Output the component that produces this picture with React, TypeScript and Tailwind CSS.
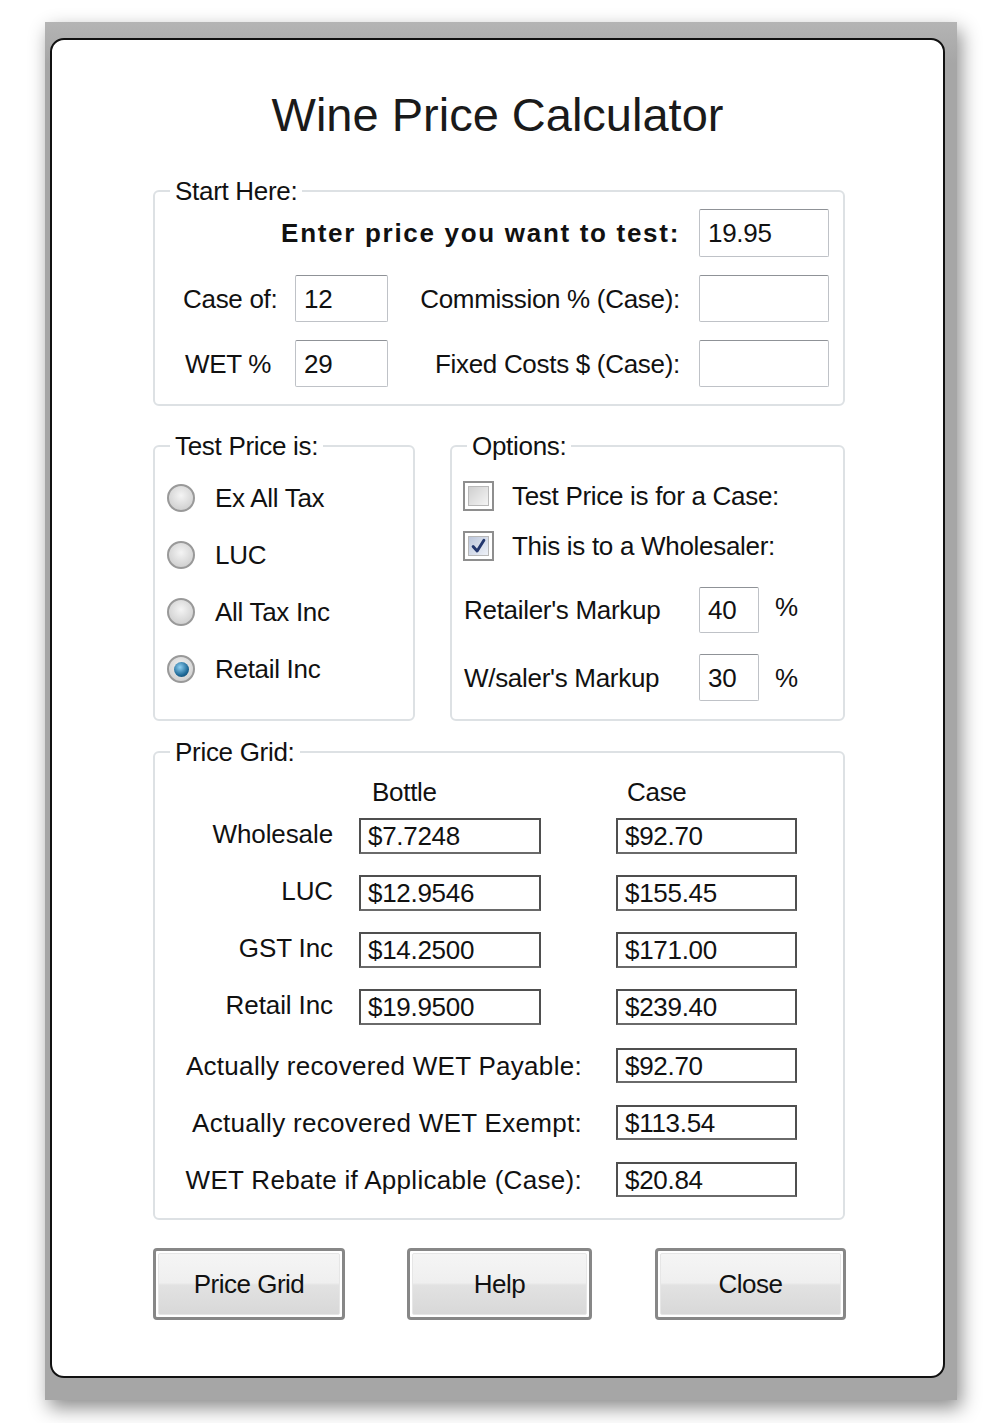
import type { ReactNode } from 'react'

function Group({ title, className, children }: { title: string; className: string; children: ReactNode }) {
  return (
    <fieldset className={`border-2 border-[#dde1e4] rounded-[6px] ${className}`}>
      <legend className="ml-[15px] px-[5px] text-[26px] leading-[30px] tracking-[-0.3px] text-[#111]">{title}</legend>
      {children}
    </fieldset>
  )
}

function Input({ value, className }: { value?: string; className: string }) {
  return (
    <div
      className={`flex items-center bg-white border border-[#bfc2c7] border-t-[#8f9297] rounded-[2px] pl-[8px] text-[26px] tracking-[-0.3px] text-[#111] ${className}`}
    >
      {value}
    </div>
  )
}

function Readout({ value, className }: { value: string; className: string }) {
  return (
    <div
      className={`flex items-center bg-white border-2 border-[#4f4f4f] border-b-[#6a6a6a] pl-[7px] text-[26px] tracking-[-0.3px] text-[#111] ${className}`}
    >
      {value}
    </div>
  )
}

function Radio({ text, checked }: { text: string; checked?: boolean }) {
  return (
    <div className="flex items-center h-[40px] gap-[20px]">
      <div className="w-[28px] h-[28px] rounded-full border-2 border-[#999] bg-[radial-gradient(circle_at_50%_40%,#f4f4f4,#c6c6c6)] flex items-center justify-center">
        {checked && (
          <div className="w-[15px] h-[15px] rounded-full bg-[radial-gradient(circle_at_40%_35%,#8fd0f2,#1f6a98_60%,#0b3858)]" />
        )}
      </div>
      <span className="text-[26px] tracking-[-0.3px] text-[#111]">{text}</span>
    </div>
  )
}

function Check({ text, checked }: { text: string; checked?: boolean }) {
  return (
    <div className="flex items-center h-[30px] gap-[18px]">
      <div className="w-[31px] h-[30px] border-2 border-[#8e8e8e] bg-white p-[3px]">
        <div
          className={`relative w-full h-full border border-[#b8b8b8] ${
            checked
              ? 'bg-[linear-gradient(135deg,#bcc7dc,#eef1f7)]'
              : 'bg-[linear-gradient(135deg,#cfcfcf,#f4f4f4)]'
          }`}
        >
          {checked && (
            <svg viewBox="0 0 20 20" className="absolute inset-0 w-full h-full">
              <path d="M4 10.5 L8.5 15.5 L16 3.5" fill="none" stroke="#23376e" strokeWidth="3.2" strokeLinecap="round" strokeLinejoin="round" />
            </svg>
          )}
        </div>
      </div>
      <span className="text-[26px] tracking-[-0.3px] text-[#111]">{text}</span>
    </div>
  )
}

function Button({ text, className }: { text: string; className: string }) {
  return (
    <div className={`h-[72px] rounded-[4px] border-[3px] border-[#878787] bg-white p-[2px] ${className}`}>
      <div className="h-full rounded-[2px] border border-[#e6e6e6] bg-[linear-gradient(#f5f5f5,#efefef_48%,#e2e2e2_52%,#d8d8d8)] flex items-center justify-center text-[26px] tracking-[-0.5px] text-[#111]">
        {text}
      </div>
    </div>
  )
}

const gridRows = [
  { name: 'Wholesale', bottle: '$7.7248', kase: '$92.70' },
  { name: 'LUC', bottle: '$12.9546', kase: '$155.45' },
  { name: 'GST Inc', bottle: '$14.2500', kase: '$171.00' },
  { name: 'Retail Inc', bottle: '$19.9500', kase: '$239.40' },
]

const wetRows = [
  { name: 'Actually recovered WET Payable:', value: '$92.70' },
  { name: 'Actually recovered WET Exempt:', value: '$113.54' },
  { name: 'WET Rebate if Applicable (Case):', value: '$20.84' },
]

export default function App() {
  return (
    <div className="w-[1000px] min-h-[1423px] bg-white pt-[22px] pl-[45px] leading-[30px] font-['Liberation_Sans',Arial,sans-serif]">
      {/* window frame */}
      <div className="w-[912px] h-[1378px] bg-[linear-gradient(#b4b4b4,#a6a6a6_3%,#a6a6a6)] pt-[16px] pl-[5px] shadow-[4px_8px_18px_rgba(0,0,0,0.45)]">
        <div className="w-[895px] h-[1340px] bg-white border-2 border-[#111] rounded-[14px] flex flex-col">
          <h1 className="mt-[48px] text-center text-[47px] leading-[53px] text-[#1a1a1a]">Wine Price Calculator</h1>

          {/* Start Here */}
          <Group title="Start Here:" className="ml-[101px] mt-[35px] w-[692px] pt-[3px] pb-[17px]">
            <div className="flex items-center justify-end pr-[14px] gap-[19px]">
              <span className="font-bold text-[26px] tracking-[1.7px] text-[#111]">Enter price you want to test:</span>
              <Input value="19.95" className="w-[130px] h-[48px]" />
            </div>
            <div className="flex items-center mt-[18px] pl-[28px] pr-[14px]">
              <span className="w-[112px] text-[26px] tracking-[-0.3px] text-[#111]">Case of:</span>
              <Input value="12" className="w-[93px] h-[47px]" />
              <span className="flex-1 text-right pr-[19px] text-[26px] tracking-[-0.3px] text-[#111]">Commission % (Case):</span>
              <Input className="w-[130px] h-[47px]" />
            </div>
            <div className="flex items-center mt-[18px] pl-[30px] pr-[14px]">
              <span className="w-[110px] text-[26px] tracking-[-0.3px] text-[#111]">WET %</span>
              <Input value="29" className="w-[93px] h-[47px]" />
              <span className="flex-1 text-right pr-[19px] text-[26px] tracking-[-0.3px] text-[#111]">Fixed Costs $ (Case):</span>
              <Input className="w-[130px] h-[47px]" />
            </div>
          </Group>

          {/* Test price + options */}
          <div className="ml-[101px] mt-[25px] w-[692px] flex gap-[35px]">
            <Group title="Test Price is:" className="w-[262px] h-[290px]">
              <div className="flex flex-col gap-[17px] pt-[17px] pl-[12px]">
                <Radio text="Ex All Tax" />
                <Radio text="LUC" />
                <Radio text="All Tax Inc" />
                <Radio text="Retail Inc" checked />
              </div>
            </Group>
            <Group title="Options:" className="w-[395px] h-[290px]">
              <div className="pt-[20px] pl-[11px]">
                <div className="flex flex-col gap-[20px]">
                  <Check text="Test Price is for a Case:" />
                  <Check text="This is to a Wholesaler:" checked />
                </div>
                <div className="flex items-center mt-[26px] pl-[1px]">
                  <span className="w-[235px] text-[26px] tracking-[-0.3px] text-[#111]">Retailer's Markup</span>
                  <Input value="40" className="w-[60px] h-[46px]" />
                  <span className="ml-[16px] -mt-[6px] text-[26px] text-[#111]">%</span>
                </div>
                <div className="flex items-center mt-[21px] pl-[1px]">
                  <span className="w-[235px] text-[26px] tracking-[-0.3px] text-[#111]">W/saler's Markup</span>
                  <Input value="30" className="w-[60px] h-[47px]" />
                  <span className="ml-[16px] text-[26px] text-[#111]">%</span>
                </div>
              </div>
            </Group>
          </div>

          {/* Price grid */}
          <Group title="Price Grid:" className="ml-[101px] mt-[16px] w-[692px] pt-[10px] pb-[21px]">
            <div className="flex h-[30px] items-center text-[26px] tracking-[-0.3px] text-[#111]">
              <span className="w-[178px]" />
              <span className="ml-[26px] w-[182px] pl-[13px]">Bottle</span>
              <span className="ml-[75px] w-[181px] pl-[11px]">Case</span>
            </div>
            <div className="mt-[11px] flex flex-col gap-[21px]">
              {gridRows.map((r) => (
                <div key={r.name} className="flex items-center">
                  <span className="w-[178px] text-right -mt-[4px] text-[26px] tracking-[-0.1px] text-[#111]">{r.name}</span>
                  <Readout value={r.bottle} className="ml-[26px] w-[182px] h-[36px]" />
                  <Readout value={r.kase} className="ml-[75px] w-[181px] h-[36px]" />
                </div>
              ))}
            </div>
            <div className="mt-[23px] flex flex-col gap-[22px]">
              {wetRows.map((r) => (
                <div key={r.name} className="flex items-center">
                  <span className="w-[427px] text-right text-[26px] tracking-[0.3px] text-[#111]">{r.name}</span>
                  <Readout value={r.value} className="ml-[34px] w-[181px] h-[35px]" />
                </div>
              ))}
            </div>
          </Group>

          {/* Buttons */}
          <div className="ml-[101px] mt-[28px] flex">
            <Button text="Price Grid" className="w-[192px]" />
            <Button text="Help" className="ml-[62px] w-[185px]" />
            <Button text="Close" className="ml-[63px] w-[191px]" />
          </div>
        </div>
      </div>
    </div>
  )
}
